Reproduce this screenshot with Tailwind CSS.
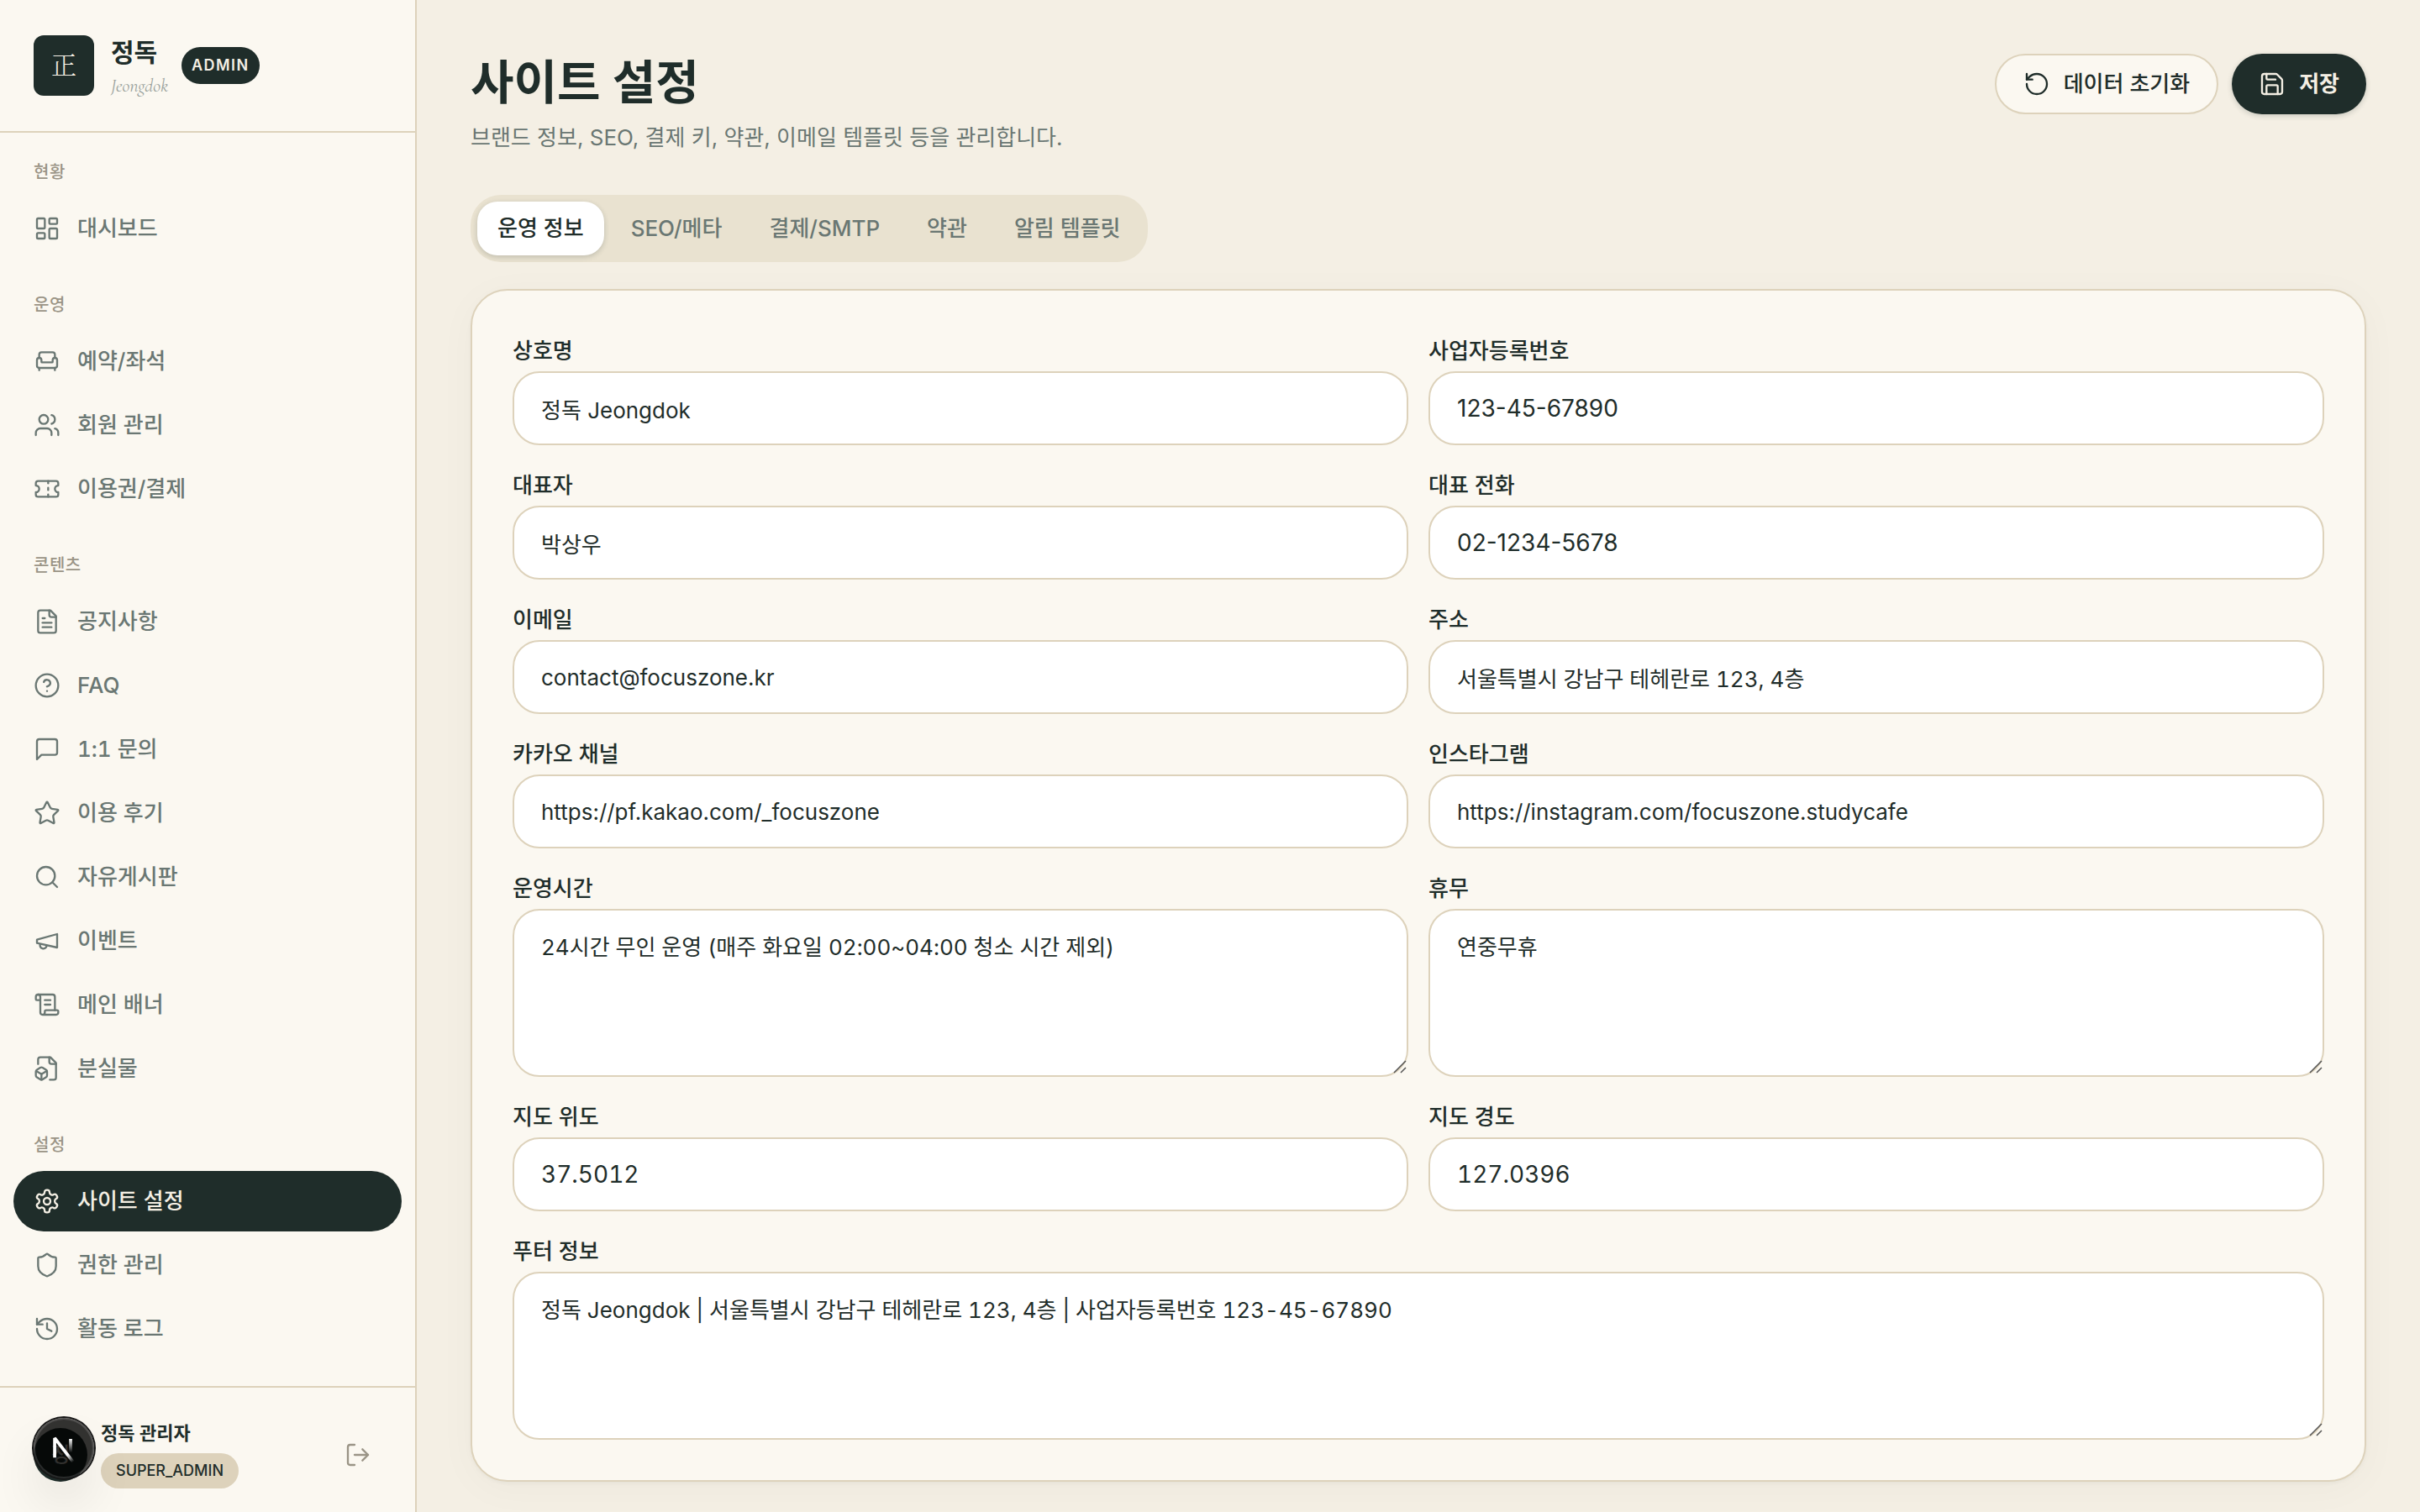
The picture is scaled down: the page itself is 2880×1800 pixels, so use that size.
<!DOCTYPE html>
<html lang="ko">
  <head>
    <title>정독 관리자 - 사이트 설정</title>
    <meta charset="utf-8" />
    <meta name="viewport" content="width=device-width, initial-scale=1" />
    <script src="https://cdn.jsdelivr.net/npm/@tailwindcss/browser@4"></script>
  </head>
  <body
    class="flex min-h-screen bg-[#f4efe4] font-[Inter,'Noto_Sans_CJK_KR',sans-serif] text-[26px] leading-10 text-[#1f2d2a]"
  >
    <!-- sidebar -->
    <aside
      class="sticky top-0 flex h-screen w-[496px] shrink-0 flex-col border-r-2 border-[#ddd2bb] bg-[#fbf8f1]"
    >
      <div class="flex h-[158px] shrink-0 items-center border-b-2 border-[#ddd2bb] px-10">
        <div
          class="flex size-18 items-center justify-center rounded-xl bg-[#1f2d2a] pb-1.5 font-['Noto_Serif_CJK_KR','Noto_Sans_CJK_KR',serif] text-[30px] font-light text-[#f4efe4]"
        >
          正
        </div>
        <div class="ml-5 pt-1">
          <p class="text-[30px] leading-9 font-bold">정독</p>
          <p
            class="mt-2 font-['Cormorant_Garamond','Liberation_Serif',serif] text-[22px] leading-7 text-[#98a09b] italic"
          >
            Jeongdok
          </p>
        </div>
        <span
          class="ml-4 flex h-11 items-center rounded-full bg-[#1f2d2a] px-3 text-[18px] font-semibold tracking-[0.08em] text-[#f4efe4]"
          >ADMIN</span
        >
      </div>

      <nav class="flex min-h-0 flex-1 flex-col gap-10 overflow-hidden px-4 py-8 text-[#6a7773] tabular-nums">
        <div>
          <p class="mb-4 px-6 text-[20px] leading-[30px] font-medium tracking-wide text-[#9a9486]">현황</p>
          <a href="#" class="flex h-18 items-center gap-5 rounded-full px-6 font-medium">
            <svg class="size-8" viewBox="0 0 24 24" fill="none" stroke="currentColor" stroke-width="1.75" stroke-linecap="round" stroke-linejoin="round">
              <rect width="7" height="9" x="3" y="3" rx="1" />
              <rect width="7" height="5" x="14" y="3" rx="1" />
              <rect width="7" height="9" x="14" y="12" rx="1" />
              <rect width="7" height="5" x="3" y="16" rx="1" />
            </svg>
            대시보드
          </a>
        </div>

        <div>
          <p class="mb-4 px-6 text-[20px] leading-[30px] font-medium tracking-wide text-[#9a9486]">운영</p>
          <div class="flex flex-col gap-1">
            <a href="#" class="flex h-18 items-center gap-5 rounded-full px-6 font-medium">
              <svg class="size-8" viewBox="0 0 24 24" fill="none" stroke="currentColor" stroke-width="1.75" stroke-linecap="round" stroke-linejoin="round">
                <path d="M19 9V6a2 2 0 0 0-2-2H7a2 2 0 0 0-2 2v3" />
                <path d="M3 16a2 2 0 0 0 2 2h14a2 2 0 0 0 2-2v-5a2 2 0 0 0-4 0v1.5a.5.5 0 0 1-.5.5h-9a.5.5 0 0 1-.5-.5V11a2 2 0 0 0-4 0z" />
                <path d="M5 18v2" />
                <path d="M19 18v2" />
              </svg>
              예약/좌석
            </a>
            <a href="#" class="flex h-18 items-center gap-5 rounded-full px-6 font-medium">
              <svg class="size-8" viewBox="0 0 24 24" fill="none" stroke="currentColor" stroke-width="1.75" stroke-linecap="round" stroke-linejoin="round">
                <path d="M16 21v-2a4 4 0 0 0-4-4H6a4 4 0 0 0-4 4v2" />
                <path d="M16 3.128a4 4 0 0 1 0 7.744" />
                <path d="M22 21v-2a4 4 0 0 0-3-3.87" />
                <circle cx="9" cy="7" r="4" />
              </svg>
              회원 관리
            </a>
            <a href="#" class="flex h-18 items-center gap-5 rounded-full px-6 font-medium">
              <svg class="size-8" viewBox="0 0 24 24" fill="none" stroke="currentColor" stroke-width="1.75" stroke-linecap="round" stroke-linejoin="round">
                <path d="M2 9a3 3 0 0 1 0 6v2a2 2 0 0 0 2 2h16a2 2 0 0 0 2-2v-2a3 3 0 0 1 0-6V7a2 2 0 0 0-2-2H4a2 2 0 0 0-2 2Z" />
                <path d="M13 5v2" />
                <path d="M13 17v2" />
                <path d="M13 11v2" />
              </svg>
              이용권/결제
            </a>
          </div>
        </div>

        <div>
          <p class="mb-4 px-6 text-[20px] leading-[30px] font-medium tracking-wide text-[#9a9486]">콘텐츠</p>
          <div class="flex flex-col gap-1">
            <a href="#" class="flex h-18 items-center gap-5 rounded-full px-6 font-medium">
              <svg class="size-8" viewBox="0 0 24 24" fill="none" stroke="currentColor" stroke-width="1.75" stroke-linecap="round" stroke-linejoin="round">
                <path d="M15 2H6a2 2 0 0 0-2 2v16a2 2 0 0 0 2 2h12a2 2 0 0 0 2-2V7Z" />
                <path d="M14 2v4a2 2 0 0 0 2 2h4" />
                <path d="M10 9H8" />
                <path d="M16 13H8" />
                <path d="M16 17H8" />
              </svg>
              공지사항
            </a>
            <a href="#" class="flex h-18 items-center gap-5 rounded-full px-6 font-medium">
              <svg class="size-8" viewBox="0 0 24 24" fill="none" stroke="currentColor" stroke-width="1.75" stroke-linecap="round" stroke-linejoin="round">
                <circle cx="12" cy="12" r="10" />
                <path d="M9.09 9a3 3 0 0 1 5.83 1c0 2-3 3-3 3" />
                <path d="M12 17h.01" />
              </svg>
              FAQ
            </a>
            <a href="#" class="flex h-18 items-center gap-5 rounded-full px-6 font-medium">
              <svg class="size-8" viewBox="0 0 24 24" fill="none" stroke="currentColor" stroke-width="1.75" stroke-linecap="round" stroke-linejoin="round">
                <path d="M21 15a2 2 0 0 1-2 2H7l-4 4V5a2 2 0 0 1 2-2h14a2 2 0 0 1 2 2z" />
              </svg>
              1:1 문의
            </a>
            <a href="#" class="flex h-18 items-center gap-5 rounded-full px-6 font-medium">
              <svg class="size-8" viewBox="0 0 24 24" fill="none" stroke="currentColor" stroke-width="1.75" stroke-linecap="round" stroke-linejoin="round">
                <path d="M11.525 2.295a.53.53 0 0 1 .95 0l2.31 4.679a2.123 2.123 0 0 0 1.595 1.16l5.166.756a.53.53 0 0 1 .294.904l-3.736 3.638a2.123 2.123 0 0 0-.611 1.878l.882 5.14a.53.53 0 0 1-.771.56l-4.618-2.428a2.122 2.122 0 0 0-1.973 0L6.396 21.01a.53.53 0 0 1-.77-.56l.881-5.139a2.122 2.122 0 0 0-.611-1.879L2.16 9.795a.53.53 0 0 1 .294-.906l5.165-.755a2.122 2.122 0 0 0 1.597-1.16z" />
              </svg>
              이용 후기
            </a>
            <a href="#" class="flex h-18 items-center gap-5 rounded-full px-6 font-medium">
              <svg class="size-8" viewBox="0 0 24 24" fill="none" stroke="currentColor" stroke-width="1.75" stroke-linecap="round" stroke-linejoin="round">
                <circle cx="11" cy="11" r="8" />
                <path d="m21 21-4.3-4.3" />
              </svg>
              자유게시판
            </a>
            <a href="#" class="flex h-18 items-center gap-5 rounded-full px-6 font-medium">
              <svg class="size-8" viewBox="0 0 24 24" fill="none" stroke="currentColor" stroke-width="1.75" stroke-linecap="round" stroke-linejoin="round">
                <path d="m3 11 18-5v12L3 14v-3z" />
                <path d="M11.6 16.8a3 3 0 1 1-5.8-1.6" />
              </svg>
              이벤트
            </a>
            <a href="#" class="flex h-18 items-center gap-5 rounded-full px-6 font-medium">
              <svg class="size-8" viewBox="0 0 24 24" fill="none" stroke="currentColor" stroke-width="1.75" stroke-linecap="round" stroke-linejoin="round">
                <path d="M15 12h-5" />
                <path d="M15 8h-5" />
                <path d="M19 17V5a2 2 0 0 0-2-2H4" />
                <path d="M8 21h12a2 2 0 0 0 2-2v-1a1 1 0 0 0-1-1H11a1 1 0 0 0-1 1v1a2 2 0 1 1-4 0V5a2 2 0 1 0-4 0v2a1 1 0 0 0 1 1h3" />
              </svg>
              메인 배너
            </a>
            <a href="#" class="flex h-18 items-center gap-5 rounded-full px-6 font-medium">
              <svg class="size-8" viewBox="0 0 24 24" fill="none" stroke="currentColor" stroke-width="1.75" stroke-linecap="round" stroke-linejoin="round">
                <path d="M14.5 22H18a2 2 0 0 0 2-2V7l-5-5H6a2 2 0 0 0-2 2v4" />
                <path d="M14 2v4a2 2 0 0 0 2 2h4" />
                <path d="M3 13.1a2 2 0 0 0-1 1.76v3.24a2 2 0 0 0 .97 1.78L6 21.7a2 2 0 0 0 2.03.01L11 19.9a2 2 0 0 0 1-1.76V14.9a2 2 0 0 0-.97-1.78L8 11.3a2 2 0 0 0-2.03-.01Z" />
                <path d="M7 17v5" />
                <path d="M11.7 14.2 7 17l-4.7-2.8" />
              </svg>
              분실물
            </a>
          </div>
        </div>

        <div>
          <p class="mb-4 px-6 text-[20px] leading-[30px] font-medium tracking-wide text-[#9a9486]">설정</p>
          <div class="flex flex-col gap-1">
            <a href="#" aria-current="page" class="flex h-18 items-center gap-5 rounded-full bg-[#1f2d2a] px-6 font-medium text-[#f4efe4]">
              <svg class="size-8" viewBox="0 0 24 24" fill="none" stroke="currentColor" stroke-width="1.75" stroke-linecap="round" stroke-linejoin="round">
                <path d="M12.22 2h-.44a2 2 0 0 0-2 2v.18a2 2 0 0 1-1 1.73l-.43.25a2 2 0 0 1-2 0l-.15-.08a2 2 0 0 0-2.73.73l-.22.38a2 2 0 0 0 .73 2.73l.15.1a2 2 0 0 1 1 1.72v.51a2 2 0 0 1-1 1.74l-.15.09a2 2 0 0 0-.73 2.73l.22.38a2 2 0 0 0 2.73.73l.15-.08a2 2 0 0 1 2 0l.43.25a2 2 0 0 1 1 1.73V20a2 2 0 0 0 2 2h.44a2 2 0 0 0 2-2v-.18a2 2 0 0 1 1-1.73l.43-.25a2 2 0 0 1 2 0l.15.08a2 2 0 0 0 2.73-.73l.22-.39a2 2 0 0 0-.73-2.73l-.15-.08a2 2 0 0 1-1-1.74v-.5a2 2 0 0 1 1-1.74l.15-.09a2 2 0 0 0 .73-2.73l-.22-.38a2 2 0 0 0-2.73-.73l-.15.08a2 2 0 0 1-2 0l-.43-.25a2 2 0 0 1-1-1.73V4a2 2 0 0 0-2-2z" />
                <circle cx="12" cy="12" r="3" />
              </svg>
              사이트 설정
            </a>
            <a href="#" class="flex h-18 items-center gap-5 rounded-full px-6 font-medium">
              <svg class="size-8" viewBox="0 0 24 24" fill="none" stroke="currentColor" stroke-width="1.75" stroke-linecap="round" stroke-linejoin="round">
                <path d="M20 13c0 5-3.5 7.5-7.66 8.95a1 1 0 0 1-.67-.01C7.5 20.5 4 18 4 13V6a1 1 0 0 1 1-1c2 0 4.5-1.2 6.24-2.72a1.17 1.17 0 0 1 1.52 0C14.51 3.81 17 5 19 5a1 1 0 0 1 1 1z" />
              </svg>
              권한 관리
            </a>
            <a href="#" class="flex h-18 items-center gap-5 rounded-full px-6 font-medium">
              <svg class="size-8" viewBox="0 0 24 24" fill="none" stroke="currentColor" stroke-width="1.75" stroke-linecap="round" stroke-linejoin="round">
                <path d="M3 12a9 9 0 1 0 9-9 9.75 9.75 0 0 0-6.74 2.74L3 8" />
                <path d="M3 3v5h5" />
                <path d="M12 7v5l4 2" />
              </svg>
              활동 로그
            </a>
          </div>
        </div>
      </nav>

      <div class="flex shrink-0 items-center border-t-2 border-[#ddd2bb] px-10 pt-10 pb-7">
        <div
          class="flex size-16 items-center justify-center rounded-full bg-[#1f2d2a] text-[24px] font-medium text-[#f4efe4]"
        >
          정
        </div>
        <div class="ml-4">
          <p class="text-[22px] leading-7 font-semibold">정독 관리자</p>
          <span
            class="mt-2.5 flex h-[42px] items-center rounded-full bg-[#ddd2bb] px-[18px] text-[18px] font-medium"
            >SUPER_ADMIN</span
          >
        </div>
        <button type="button" aria-label="로그아웃" class="mr-3 ml-auto text-[#9a9486]">
          <svg class="size-8" viewBox="0 0 24 24" fill="none" stroke="currentColor" stroke-width="1.75" stroke-linecap="round" stroke-linejoin="round">
            <path d="m16 17 5-5-5-5" />
            <path d="M21 12H9" />
            <path d="M9 21H5a2 2 0 0 1-2-2V5a2 2 0 0 1 2-2h4" />
          </svg>
        </button>
      </div>
    </aside>

    <!-- content -->
    <main class="min-w-0 flex-1 px-16 pt-16 pb-9">
      <header class="flex items-start justify-between">
        <div>
          <h1 class="text-[56px] leading-17 font-semibold">사이트 설정</h1>
          <p class="mt-3 text-[#6a7773]">
            브랜드 정보, SEO, 결제 키, 약관, 이메일 템플릿 등을 관리합니다.
          </p>
        </div>
        <div class="flex gap-4">
          <button
            type="button"
            class="flex h-18 items-center gap-4 rounded-full border-2 border-[#ddd2bb] bg-[#fbf8f1] px-8 font-medium"
          >
            <svg class="size-8" viewBox="0 0 24 24" fill="none" stroke="currentColor" stroke-width="1.75" stroke-linecap="round" stroke-linejoin="round">
              <path d="M3 12a9 9 0 1 0 9-9 9.75 9.75 0 0 0-6.74 2.74L3 8" />
              <path d="M3 3v5h5" />
            </svg>
            데이터 초기화
          </button>
          <button
            type="button"
            class="flex h-18 items-center gap-4 rounded-full bg-[#1f2d2a] px-8 font-semibold text-[#f4efe4] shadow-[0_2px_6px_rgba(31,45,42,0.2)]"
          >
            <svg class="size-8" viewBox="0 0 24 24" fill="none" stroke="currentColor" stroke-width="1.75" stroke-linecap="round" stroke-linejoin="round">
              <path d="M15.2 3a2 2 0 0 1 1.4.6l3.8 3.8a2 2 0 0 1 .6 1.4V19a2 2 0 0 1-2 2H5a2 2 0 0 1-2-2V5a2 2 0 0 1 2-2z" />
              <path d="M17 21v-7a1 1 0 0 0-1-1H8a1 1 0 0 0-1 1v7" />
              <path d="M7 3v4a1 1 0 0 0 1 1h7" />
            </svg>
            저장
          </button>
        </div>
      </header>

      <div role="tablist" class="mt-12 flex h-20 w-fit gap-2 rounded-[36px] bg-[#e9e2d0] p-2 font-medium text-[#6a7773]">
        <button type="button" role="tab" aria-selected="true" class="rounded-3xl bg-white px-6 text-[#1f2d2a] shadow-[0_2px_6px_rgba(31,45,42,0.2)]">운영 정보</button>
        <button type="button" role="tab" class="px-6">SEO/메타</button>
        <button type="button" role="tab" class="px-6">결제/SMTP</button>
        <button type="button" role="tab" class="px-6">약관</button>
        <button type="button" role="tab" class="px-6">알림 템플릿</button>
      </div>

      <form
        class="mt-8 grid grid-cols-2 gap-6 rounded-[44px] border-2 border-[#ddd2bb] bg-[#fbf8f1] p-12 shadow-[0_2px_4px_rgba(31,45,42,0.04),0_8px_48px_rgba(31,45,42,0.03)]"
      >
        <div>
          <label for="name" class="block leading-12 font-medium">상호명</label>
          <input id="name" value="정독 Jeongdok" class="block h-22 w-full rounded-[32px] border-2 border-[#ddd2bb] bg-white px-8" />
        </div>
        <div>
          <label for="biz" class="block leading-12 font-medium">사업자등록번호</label>
          <input id="biz" value="123-45-67890" class="block h-22 w-full rounded-[32px] border-2 border-[#ddd2bb] bg-white px-8 text-[28px]" />
        </div>
        <div>
          <label for="owner" class="block leading-12 font-medium">대표자</label>
          <input id="owner" value="박상우" class="block h-22 w-full rounded-[32px] border-2 border-[#ddd2bb] bg-white px-8" />
        </div>
        <div>
          <label for="tel" class="block leading-12 font-medium">대표 전화</label>
          <input id="tel" value="02-1234-5678" class="block h-22 w-full rounded-[32px] border-2 border-[#ddd2bb] bg-white px-8 text-[28px]" />
        </div>
        <div>
          <label for="email" class="block leading-12 font-medium">이메일</label>
          <input id="email" value="contact@focuszone.kr" class="block h-22 w-full rounded-[32px] border-2 border-[#ddd2bb] bg-white px-8" />
        </div>
        <div>
          <label for="addr" class="block leading-12 font-medium">주소</label>
          <input id="addr" value="서울특별시 강남구 테헤란로 123, 4층" class="block h-22 w-full rounded-[32px] border-2 border-[#ddd2bb] bg-white px-8 tabular-nums" />
        </div>
        <div>
          <label for="kakao" class="block leading-12 font-medium">카카오 채널</label>
          <input id="kakao" value="https://pf.kakao.com/_focuszone" class="block h-22 w-full rounded-[32px] border-2 border-[#ddd2bb] bg-white px-8" />
        </div>
        <div>
          <label for="insta" class="block leading-12 font-medium">인스타그램</label>
          <input id="insta" value="https://instagram.com/focuszone.studycafe" class="block h-22 w-full rounded-[32px] border-2 border-[#ddd2bb] bg-white px-8" />
        </div>
        <div class="relative">
          <label for="hours" class="block leading-12 font-medium">운영시간</label>
          <textarea id="hours" class="block h-50 w-full resize-none rounded-[32px] border-2 border-[#ddd2bb] bg-white px-8 py-6 tabular-nums">24시간 무인 운영 (매주 화요일 02:00~04:00 청소 시간 제외)</textarea>
          <svg class="absolute right-0.5 bottom-1 size-4" viewBox="0 0 16 16" stroke="#555" stroke-width="1.5"><path d="M1 15 15 1M9 15l6-6" /></svg>
        </div>
        <div class="relative">
          <label for="closed" class="block leading-12 font-medium">휴무</label>
          <textarea id="closed" class="block h-50 w-full resize-none rounded-[32px] border-2 border-[#ddd2bb] bg-white px-8 py-6">연중무휴</textarea>
          <svg class="absolute right-0.5 bottom-1 size-4" viewBox="0 0 16 16" stroke="#555" stroke-width="1.5"><path d="M1 15 15 1M9 15l6-6" /></svg>
        </div>
        <div>
          <label for="lat" class="block leading-12 font-medium">지도 위도</label>
          <input id="lat" value="37.5012" class="block h-22 w-full rounded-[32px] border-2 border-[#ddd2bb] bg-white px-8 text-[28px] tabular-nums" />
        </div>
        <div>
          <label for="lng" class="block leading-12 font-medium">지도 경도</label>
          <input id="lng" value="127.0396" class="block h-22 w-full rounded-[32px] border-2 border-[#ddd2bb] bg-white px-8 text-[28px] tabular-nums" />
        </div>
        <div class="relative col-span-2">
          <label for="footer" class="block leading-12 font-medium">푸터 정보</label>
          <textarea id="footer" class="block h-50 w-full resize-none rounded-[32px] border-2 border-[#ddd2bb] bg-white px-8 py-6 tabular-nums">정독 Jeongdok | 서울특별시 강남구 테헤란로 123, 4층 | 사업자등록번호 123-45-67890</textarea>
          <svg class="absolute right-0.5 bottom-1 size-4" viewBox="0 0 16 16" stroke="#555" stroke-width="1.5"><path d="M1 15 15 1M9 15l6-6" /></svg>
        </div>
      </form>
    </main>

    <!-- dev tools badge, floats over the avatar -->
    <button
      type="button"
      aria-label="Next.js Dev Tools"
      class="fixed bottom-10 left-10 flex size-18 items-center justify-center rounded-full bg-black/80 shadow-[0_0_0_2px_#171717,inset_0_0_0_2px_rgba(255,255,255,0.14),0_32px_64px_-16px_rgba(0,0,0,0.24)]"
    >
      <svg class="size-20 shrink-0" viewBox="0 0 40 40" fill="none">
        <defs>
          <linearGradient id="n0" gradientUnits="userSpaceOnUse" x1="9.96" y1="11.12" x2="15.48" y2="17.97">
            <stop stop-color="#fff" />
            <stop offset="0.6" stop-color="#fff" stop-opacity="0" />
          </linearGradient>
          <linearGradient id="n1" gradientUnits="userSpaceOnUse" x1="11.82" y1="1.4" x2="11.79" y2="9.63">
            <stop stop-color="#fff" />
            <stop offset="1" stop-color="#fff" stop-opacity="0" />
          </linearGradient>
        </defs>
        <g transform="translate(12.2 13)" stroke-width="1.86">
          <path d="M13.3 15.2 2.34 1v11.6" stroke="url(#n0)" stroke-linejoin="bevel" />
          <path d="M11.825 1.5v11.6" stroke="url(#n1)" />
        </g>
      </svg>
    </button>
  </body>
</html>
